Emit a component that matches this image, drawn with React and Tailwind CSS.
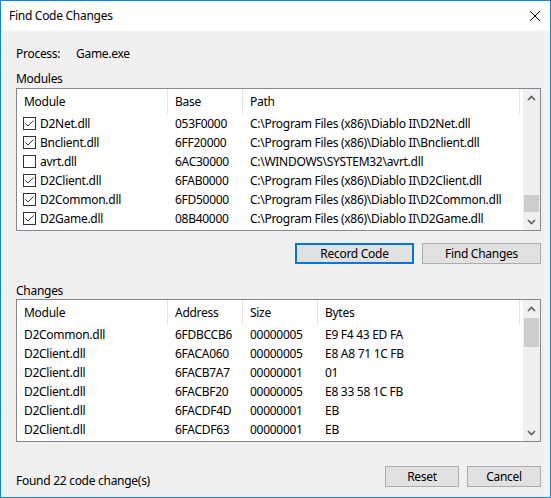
const modules = [
  { name: 'D2Net.dll', base: '053F0000', path: 'C:\\Program Files (x86)\\Diablo II\\D2Net.dll', checked: true },
  { name: 'Bnclient.dll', base: '6FF20000', path: 'C:\\Program Files (x86)\\Diablo II\\Bnclient.dll', checked: true },
  { name: 'avrt.dll', base: '6AC30000', path: 'C:\\WINDOWS\\SYSTEM32\\avrt.dll', checked: false },
  { name: 'D2Client.dll', base: '6FAB0000', path: 'C:\\Program Files (x86)\\Diablo II\\D2Client.dll', checked: true },
  { name: 'D2Common.dll', base: '6FD50000', path: 'C:\\Program Files (x86)\\Diablo II\\D2Common.dll', checked: true },
  { name: 'D2Game.dll', base: '08B40000', path: 'C:\\Program Files (x86)\\Diablo II\\D2Game.dll', checked: true },
];

const changes = [
  { module: 'D2Common.dll', address: '6FDBCCB6', size: '00000005', bytes: 'E9 F4 43 ED FA' },
  { module: 'D2Client.dll', address: '6FACA060', size: '00000005', bytes: 'E8 A8 71 1C FB' },
  { module: 'D2Client.dll', address: '6FACB7A7', size: '00000001', bytes: '01' },
  { module: 'D2Client.dll', address: '6FACBF20', size: '00000005', bytes: 'E8 33 58 1C FB' },
  { module: 'D2Client.dll', address: '6FACDF4D', size: '00000001', bytes: 'EB' },
  { module: 'D2Client.dll', address: '6FACDF63', size: '00000001', bytes: 'EB' },
];

const Checkbox = ({ checked }) => (
  <span className="w-[13px] h-[13px] border border-[#333] bg-white flex items-center justify-center shrink-0">
    {checked && (
      <svg width="11" height="11" viewBox="0 0 11 11">
        <path d="M1.5 5.5 L4 8 L9.5 2.5" fill="none" stroke="#333" strokeWidth="1" />
      </svg>
    )}
  </span>
);

const Chevron = ({ up }) => (
  <svg width="9" height="6" viewBox="0 0 9 6">
    <path d={up ? 'M1 5 L4.5 1.5 L8 5' : 'M1 1 L4.5 4.5 L8 1'} fill="none" stroke="#606060" strokeWidth="1.6" />
  </svg>
);

const Scrollbar = ({ thumbTop, thumbHeight }) => (
  <div className="w-[17px] bg-[#f0f0f0] flex flex-col shrink-0">
    <div className="h-[17px] flex items-center justify-center shrink-0">
      <Chevron up />
    </div>
    <div className="flex-1 flex flex-col">
      <div style={{ height: thumbTop }} />
      <div className="bg-[#cdcdcd] mx-[1px]" style={{ height: thumbHeight }} />
    </div>
    <div className="h-[17px] flex items-center justify-center shrink-0">
      <Chevron />
    </div>
  </div>
);

const HeaderCell = ({ children, className }) => (
  <div className={`h-[25px] flex items-center pl-[7px] border-r border-[#e5e5e5] shrink-0 ${className}`}>
    {children}
  </div>
);

const Button = ({ children, focused, className }) => (
  <button
    className={`h-[21px] bg-[#e1e1e1] flex items-center justify-center ${
      focused ? 'border-2 border-[#0078d7]' : 'border border-[#adadad]'
    } ${className}`}
  >
    {children}
  </button>
);

export default function App() {
  return (
    <div
      className="w-[551px] h-[498px] border border-[#1883d7] flex flex-col text-[12px] tracking-[-0.28px] text-black leading-[16px]"
      style={{ fontFamily: '"Noto Sans", Arial, sans-serif' }}
    >
      {/* Title bar */}
      <div className="h-[30px] bg-white flex items-center justify-between pl-[8px] shrink-0">
        <span>Find Code Changes</span>
        <svg width="30" height="30" viewBox="0 0 30 30">
          <path d="M10 10 L20 20 M20 10 L10 20" stroke="#000" strokeWidth="1" />
        </svg>
      </div>

      <div className="flex-1 bg-[#f0f0f0] flex flex-col pl-[15px] pr-[9px]">
        {/* Process */}
        <div className="flex mt-[15px]">
          <span className="w-[60px]">Process:</span>
          <span>Game.exe</span>
        </div>

        {/* Modules */}
        <div className="mt-[9px]">Modules</div>
        <div className="mt-[1px] h-[143px] border border-[#828790] bg-white flex">
          <div className="flex-1 flex flex-col">
            <div className="flex">
              <HeaderCell className="w-[151px]">Module</HeaderCell>
              <HeaderCell className="w-[75px]">Base</HeaderCell>
              <HeaderCell className="w-[277px]">Path</HeaderCell>
            </div>
            {modules.map((m) => (
              <div key={m.name} className="h-[19px] flex items-center">
                <div className="w-[151px] pl-[6px] flex items-center gap-[4px]">
                  <Checkbox checked={m.checked} />
                  <span>{m.name}</span>
                </div>
                <div className="w-[75px] pl-[7px]">{m.base}</div>
                <div className="pl-[7px] whitespace-nowrap">{m.path}</div>
              </div>
            ))}
          </div>
          <Scrollbar thumbTop={89} thumbHeight={17} />
        </div>

        {/* Record / Find buttons */}
        <div className="flex justify-end gap-[8px] mt-[12px]">
          <Button focused className="w-[119px]">Record Code</Button>
          <Button className="w-[119px]">Find Changes</Button>
        </div>

        {/* Changes */}
        <div className="mt-[19px]">Changes</div>
        <div className="h-[143px] border border-[#828790] bg-white flex">
          <div className="flex-1 flex flex-col">
            <div className="flex">
              <HeaderCell className="w-[151px]">Module</HeaderCell>
              <HeaderCell className="w-[75px]">Address</HeaderCell>
              <HeaderCell className="w-[75px]">Size</HeaderCell>
              <HeaderCell className="w-[202px]">Bytes</HeaderCell>
            </div>
            {changes.map((c) => (
              <div key={c.address} className="h-[19px] flex items-center">
                <div className="w-[151px] pl-[7px]">{c.module}</div>
                <div className="w-[75px] pl-[7px]">{c.address}</div>
                <div className="w-[75px] pl-[7px]">{c.size}</div>
                <div className="pl-[7px]">{c.bytes}</div>
              </div>
            ))}
          </div>
          <Scrollbar thumbTop={1} thumbHeight={29} />
        </div>

        {/* Footer */}
        <div className="flex items-end justify-between mt-[24px]">
          <span className="mb-[-2px]">Found 22 code change(s)</span>
          <div className="flex gap-[8px]">
            <Button className="w-[74px]">Reset</Button>
            <Button className="w-[74px]">Cancel</Button>
          </div>
        </div>
      </div>
    </div>
  );
}
